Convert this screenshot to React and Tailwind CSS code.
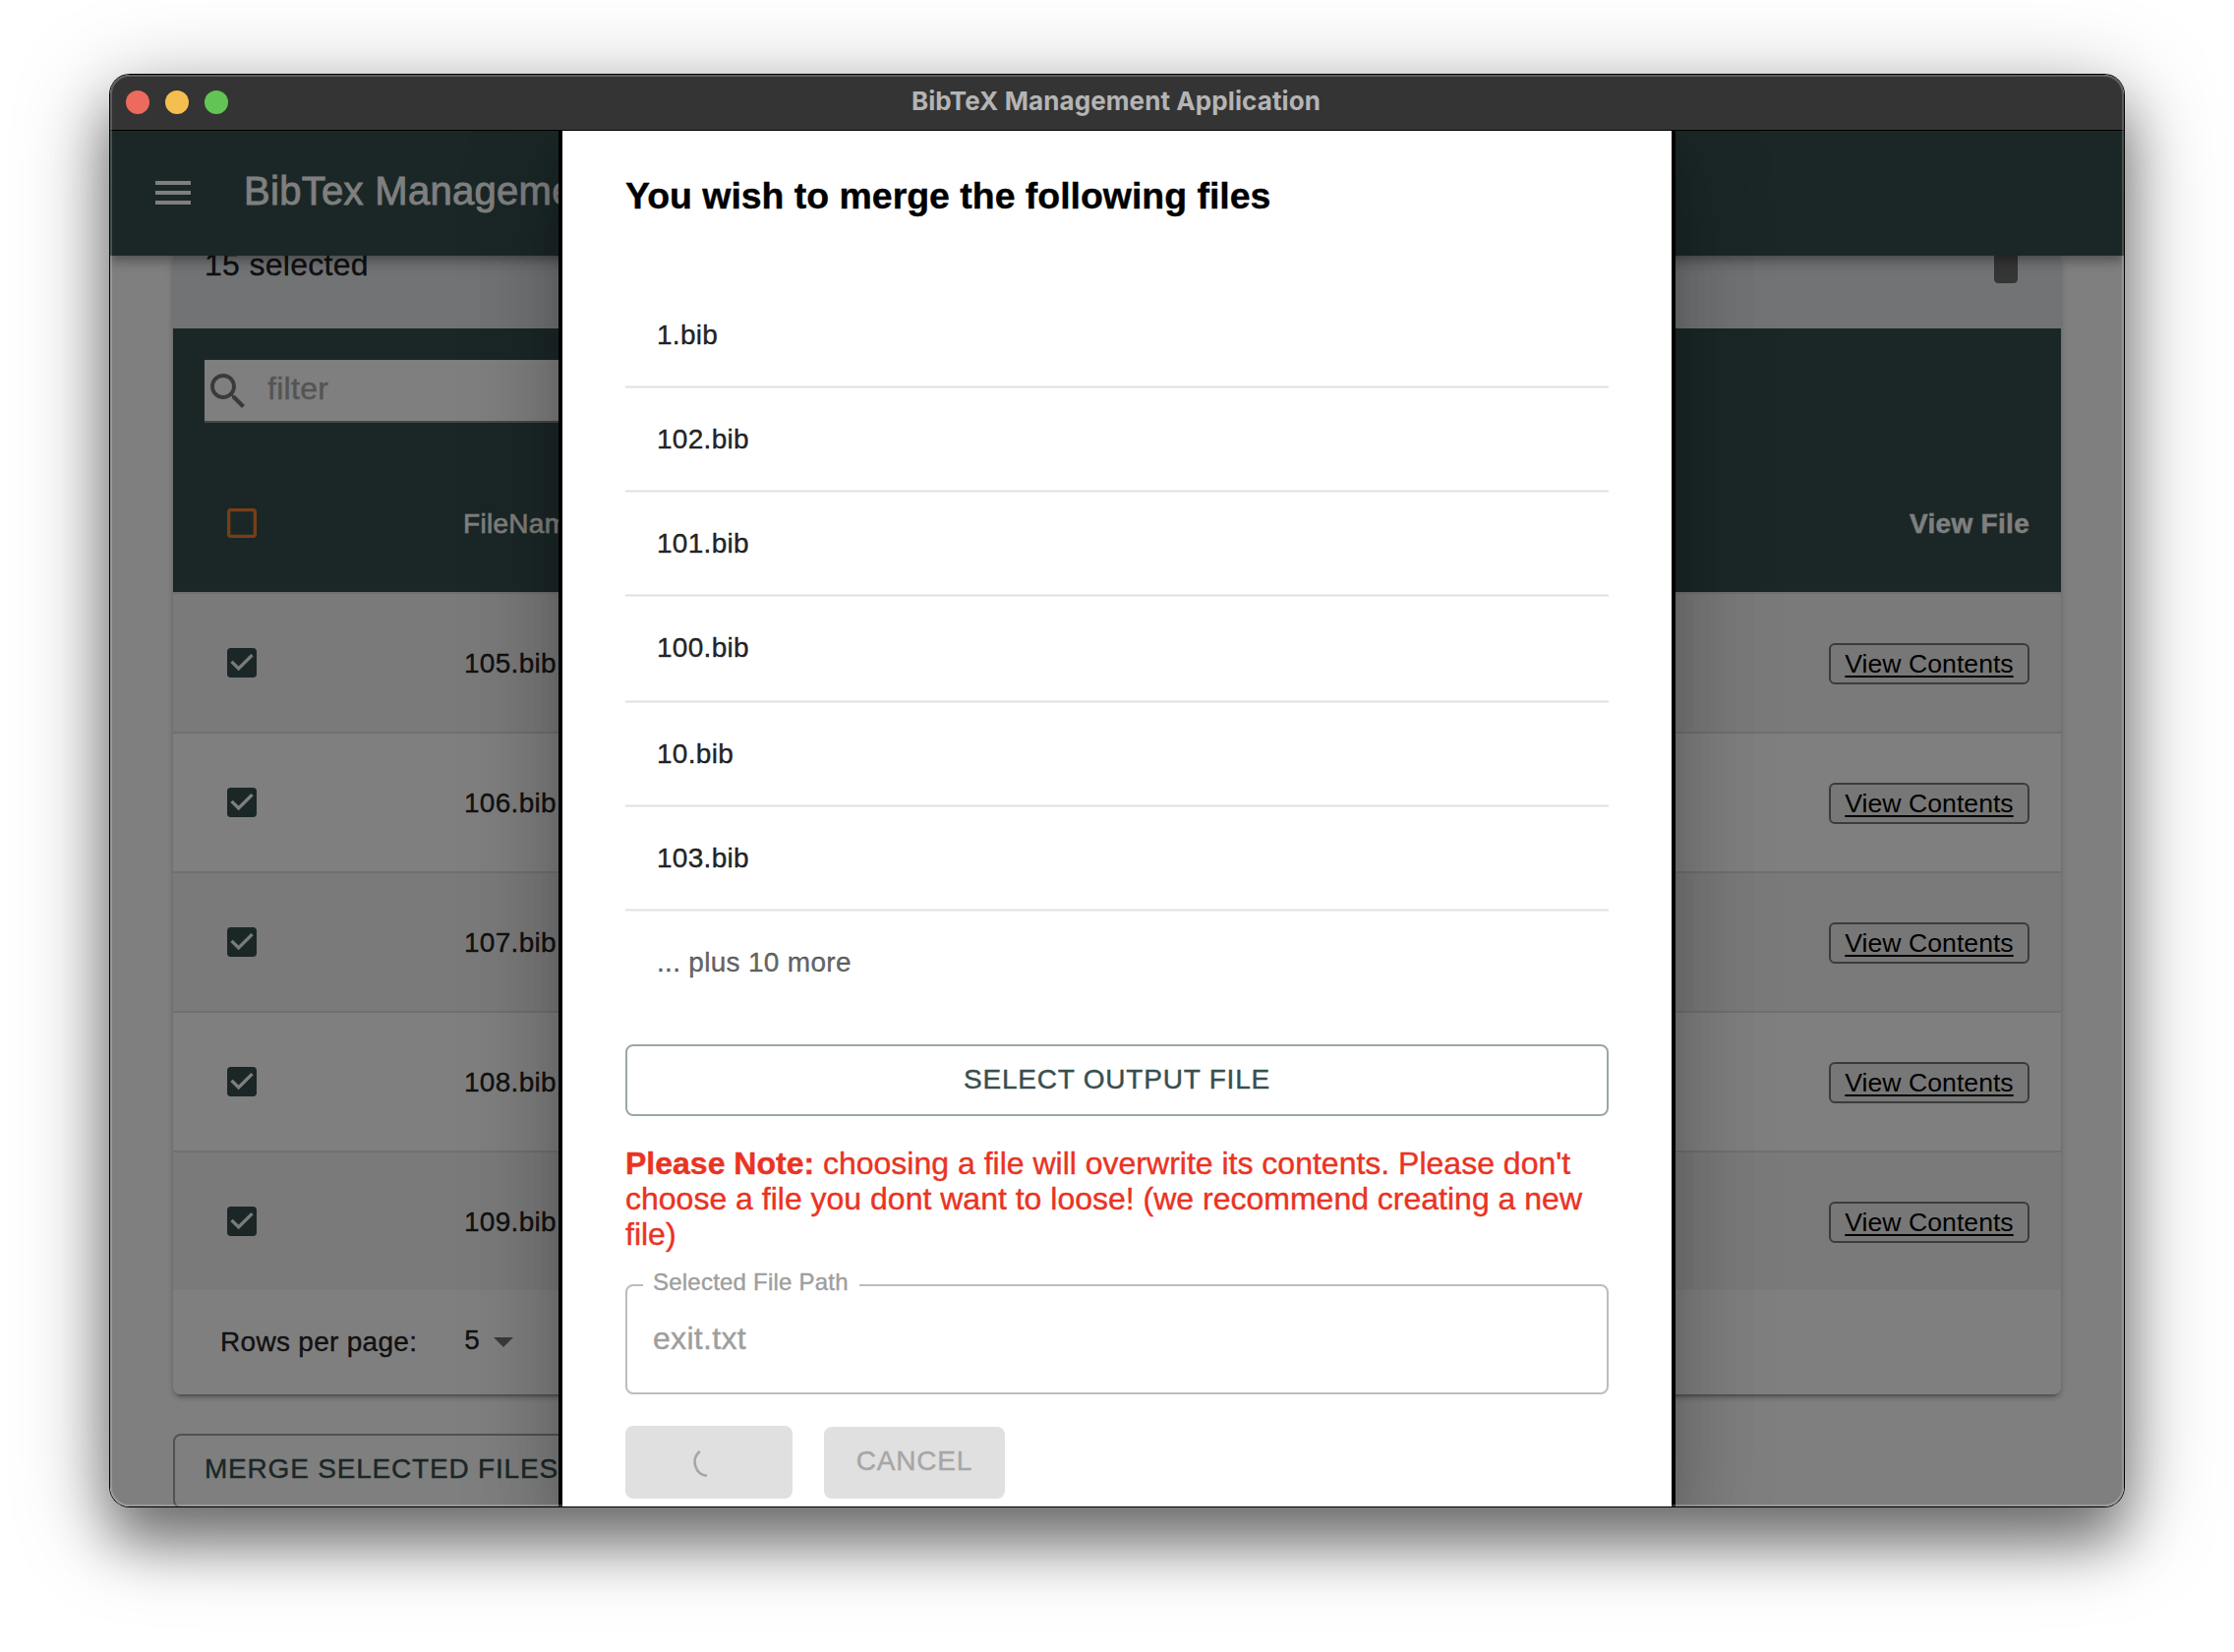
import React from "react";

const mergeFiles = ["1.bib", "102.bib", "101.bib", "100.bib", "10.bib", "103.bib"];
const rows = ["105.bib", "106.bib", "107.bib", "108.bib", "109.bib"];

function Icon({ d, className }) {
  return (
    <svg viewBox="0 0 24 24" className={className} fill="currentColor">
      <path d={d} />
    </svg>
  );
}

const MENU = "M3 18h18v-2H3v2zm0-5h18v-2H3v2zm0-7v2h18V6H3z";
const DELETE = "M6 19c0 1.1.9 2 2 2h8c1.1 0 2-.9 2-2V7H6v12zM19 4h-3.5l-1-1h-5l-1 1H5v2h14V4z";
const SEARCH =
  "M15.5 14h-.79l-.28-.27C15.41 12.59 16 11.11 16 9.5 16 5.91 13.09 3 9.5 3S3 5.91 3 9.5 5.91 16 9.5 16c1.61 0 3.09-.59 4.23-1.57l.27.28v.79l5 4.99L20.49 19l-4.99-5zm-6 0C7.01 14 5 11.99 5 9.5S7.01 5 9.5 5 14 7.01 14 9.5 11.99 14 9.5 14z";
const BOX = "M19 5v14H5V5h14m0-2H5c-1.1 0-2 .9-2 2v14c0 1.1.9 2 2 2h14c1.1 0 2-.9 2-2V5c0-1.1-.9-2-2-2z";
const CHECKED =
  "M19 3H5c-1.11 0-2 .9-2 2v14c0 1.1.89 2 2 2h14c1.11 0 2-.9 2-2V5c0-1.1-.89-2-2-2zm-9 14l-5-5 1.41-1.41L10 14.17l7.59-7.59L19 8l-9 9z";

function TitleBar() {
  return (
    <div className="flex h-[56px] shrink-0 items-center bg-[#343434]">
      <div className="flex gap-4 pl-4">
        <span className="size-6 rounded-full bg-[#ec6a5e]" />
        <span className="size-6 rounded-full bg-[#f4bf4f]" />
        <span className="size-6 rounded-full bg-[#61c554]" />
      </div>
      <div className="-mt-[2px] grow pr-[136px] text-center font-['Inter'] text-[26px] leading-8 font-bold tracking-[0.1px] text-[#b4b4b4] [-webkit-text-stroke:0px]">
        <span className="inline-block pl-[14px]">BibTeX Management Application</span>
      </div>
    </div>
  );
}

function Row({ name, shaded, last }) {
  return (
    <div
      className={
        "flex items-center pr-8 pl-[50px] " +
        (shaded ? "bg-[#f5f5f5] " : "bg-white ") +
        (last ? "h-[140px]" : "h-[142px] border-b-2 border-[#e0e0e0]")
      }
    >
      <Icon d={CHECKED} className="size-10 text-[#374f4f]" />
      <div className="mt-[2px] ml-[206px] grow text-[28px] tracking-[0.3px] text-black/87">{name}</div>
      <div className="mt-[2px] flex h-[42px] w-[204px] items-center justify-center rounded-[6px] border-2 border-[#767676] bg-[#efefef] pt-[2px] text-[26.66px] text-black underline decoration-2 underline-offset-[3px] [-webkit-text-stroke:0px]">
        View Contents
      </div>
    </div>
  );
}

function Page() {
  return (
    <div className="flex h-full flex-col">
      <header className="relative z-10 flex h-32 shrink-0 items-center bg-[#374f4f] pl-10 text-white shadow-[0_4px_8px_-2px_rgba(0,0,0,0.2),0_8px_10px_0_rgba(0,0,0,0.14),0_2px_20px_0_rgba(0,0,0,0.12)]">
        <Icon d={MENU} className="size-12" />
        <div className="ml-12 pb-1 text-[40px] leading-[60px] tracking-[0.3px] [-webkit-text-stroke:0.8px]">BibTex Management</div>
      </header>
      <main className="flex min-h-0 grow flex-col bg-white px-16">
        <section className="shrink-0 overflow-visible rounded-b-lg shadow-[0_6px_2px_-4px_rgba(0,0,0,0.2),0_4px_4px_0_rgba(0,0,0,0.14),0_2px_10px_0_rgba(0,0,0,0.12)]">
          <div className="flex h-[74px] items-start justify-between bg-[#e4e6ea] px-8">
            <div className="-mt-[11px] text-[32px] leading-10 tracking-[0.3px] text-black/87">15 selected</div>
            <Icon d={DELETE} className="-mt-[14px] size-12 text-black/54" />
          </div>
          <div className="h-[268px] bg-[#374f4f] px-8 pt-8">
            <div className="flex h-16 w-[500px] items-center border-b-2 border-[#8c8c8c] bg-white">
              <Icon d={SEARCH} className="mt-[2px] size-12 text-black/54" />
              <span className="-mt-1 ml-4 text-[32px] leading-10 tracking-[0.3px] text-[#a9a9a9]">filter</span>
            </div>
            <div className="mt-[82px] flex h-10 items-center pl-[18px] text-white">
              <Icon d={BOX} className="size-10 text-[#ee7f2d]" />
              <div className="mt-[2px] ml-[205px] grow text-[28px] tracking-[0.3px] [-webkit-text-stroke:0.6px]">FileName</div>
              <div className="mt-[2px] text-[28px] font-bold tracking-[0.3px]">View File</div>
            </div>
          </div>
          <div className="h-0.5 bg-[#e0e0e0]" />
          {rows.map((name, i) => (
            <Row key={name} name={name} shaded={i % 2 === 0} last={i === rows.length - 1} />
          ))}
          <div className="flex h-[106px] items-center rounded-b-lg bg-white pl-12 text-[28px] tracking-[0.3px] text-black/87">
            <span>Rows per page:</span>
            <span className="-mt-[5px] ml-12">5</span>
            <Icon d="M7 10l5 5 5-5z" className="-mt-[2px] size-12 text-black/54" />
          </div>
        </section>
        <div className="mt-10 flex h-[76px] w-[460px] shrink-0 items-center rounded-lg border-2 border-[#374f4f]/50 pl-[30px] text-[28px] tracking-[0.8px] whitespace-nowrap text-[#374f4f]">
          <span className="-mt-[4px]">MERGE SELECTED FILES</span>
        </div>
      </main>
    </div>
  );
}

function Divider() {
  return <div className="h-[3px] border-y border-[#f0f0f0] bg-[#e0e0e0]" />;
}

function Dialog() {
  return (
    <div className="flex h-full w-[1136px] flex-col border-x-4 border-black bg-white px-16 shadow-[0_22px_30px_-14px_rgba(0,0,0,0.2),0_48px_76px_6px_rgba(0,0,0,0.14),0_18px_92px_16px_rgba(0,0,0,0.12)]">
      <h3 className="mt-[46px] text-[37.44px] leading-[42px] font-bold text-black">
        You wish to merge the following files
      </h3>
      <div className="mt-[69px] text-[28px] text-black/87">
        {mergeFiles.map((f, i) => (
          <div key={f}>
            <div className={(i === 3 ? "h-[105px] " : "h-[103px] ") + "px-8 pt-8 leading-10 tracking-[0.3px]"}>{f}</div>
            <Divider />
          </div>
        ))}
        <div className="h-[103px] px-8 pt-8 leading-10 tracking-[0.3px] text-black/60">... plus 10 more</div>
      </div>
      <div className="mt-[32px] flex h-[73px] shrink-0 items-center justify-center rounded-lg border-2 border-[#9ba7a7] text-[28px] tracking-[0.8px] text-[#374f4f]">
        <span className="-mt-[2px]">SELECT OUTPUT FILE</span>
      </div>
      <p className="mt-[30px] text-[32px] leading-9 whitespace-nowrap text-[#ea3323]">
        <b>Please Note:</b> choosing a file will overwrite its contents. Please don't
        <br />
        choose a file you dont want to loose! (we recommend creating a new
        <br />
        file)
      </p>
      <div className="relative mt-[33px] flex h-[112px] shrink-0 items-center rounded-lg border-2 border-[#bdbdbd] pl-[26px] text-[32px] tracking-[0.3px] text-[#9e9e9e]">
        <span className="absolute -top-[20px] left-4 bg-white pr-[11px] pl-[10px] text-[24px] leading-8 tracking-[0.22px]">Selected File Path</span>
        <span className="-mt-[2px]">exit.txt</span>
      </div>
      <div className="mt-8 flex gap-8">
        <div className="flex h-[74px] w-[170px] items-center justify-center rounded-lg bg-[#e0e0e0]">
          <svg viewBox="0 0 32 32" className="size-8" fill="none" stroke="#a6a6a6" strokeWidth="2.6">
            <path d="M6.7 5 A14.1 14.1 0 0 0 14 29.8" />
          </svg>
        </div>
        <div className="mt-px flex h-[73px] w-[184px] items-center justify-center rounded-lg bg-[#e0e0e0] text-[28px] tracking-[0.8px] text-[#a6a6a6]">
          <span className="-mt-[3px]">CANCEL</span>
        </div>
      </div>
    </div>
  );
}

export default function App() {
  return (
    <div className="h-[1680px] w-[2272px] overflow-hidden bg-white px-28 pt-[76px] font-['Liberation_Sans',Arial,sans-serif] [-webkit-text-stroke:0.4px]">
      <div className="relative h-[1456px] w-[2048px] rounded-[20px] shadow-[0_0_0_1px_#000,0_36px_56px_0_rgba(0,0,0,0.42),0_20px_96px_0_rgba(0,0,0,0.36)]">
        <div className="flex h-full flex-col overflow-hidden rounded-[20px]">
          <TitleBar />
          <div className="relative h-[1400px] overflow-hidden">
            <Page />
            <div className="absolute inset-0 z-20 flex justify-center bg-black/50">
              <Dialog />
            </div>
            <div className="absolute inset-x-0 top-0 z-30 h-px bg-black" />
          </div>
        </div>
        <div className="pointer-events-none absolute inset-0 z-40 rounded-[20px] border-2 border-white/20" />
      </div>
    </div>
  );
}
